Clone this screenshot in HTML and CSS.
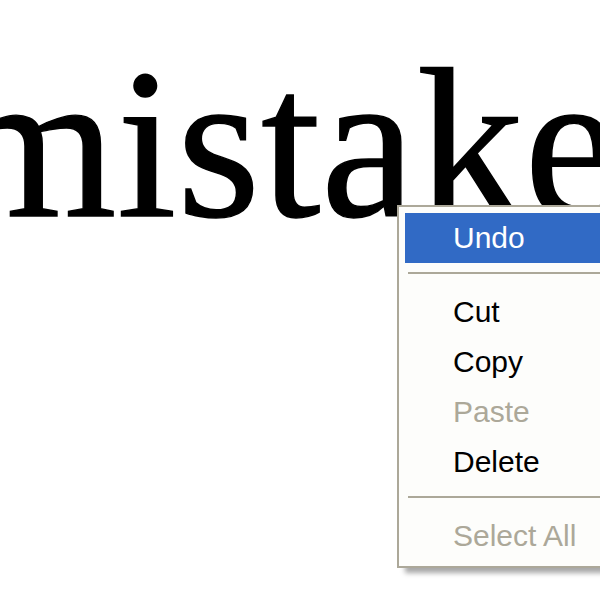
FILE: index.html
```html
<!DOCTYPE html>
<html lang="en">
<head>
    <meta charset="UTF-8">
    <title>mistake</title>
    <link rel="stylesheet" href="styles.css">
</head>
<body>
    <div class="page">
        <div class="word">mistake</div>

        <div class="context-menu">
            <div class="menu-item active">Undo</div>
            <div class="menu-sep"></div>
            <div class="menu-item">Cut</div>
            <div class="menu-item">Copy</div>
            <div class="menu-item disabled">Paste</div>
            <div class="menu-item">Delete</div>
            <div class="menu-sep"></div>
            <div class="menu-item disabled">Select All</div>
        </div>
    </div>
</body>
</html>
```

FILE: styles.css
```css
body {
    margin: 0;
    padding: 0;
    background: #fff;
    overflow: hidden;
}

.page {
    position: relative;
    width: 600px;
    height: 600px;
    overflow: hidden;
}

.word {
    font-family: "Liberation Serif", "Times New Roman", serif;
    font-size: 214px;
    line-height: 1;
    letter-spacing: 0.6px;
    color: #000;
    -webkit-text-stroke: 1.4px #000;
    margin: 37px 0 0 -50px;
    white-space: nowrap;
}

.context-menu {
    position: absolute;
    top: 205px;
    left: 397px;
    width: 260px;
    background: #fdfdfb;
    border: 2px solid #aca899;
    padding: 6px 0 5px 6px;
    box-shadow: 8px 5px 5px rgba(0, 0, 0, 0.35);
    font-family: "Liberation Sans", Tahoma, sans-serif;
    font-size: 30px;
}

.menu-item {
    height: 50px;
    line-height: 50px;
    padding-left: 48px;
    color: #000;
}

.menu-item.active {
    background: #316ac5;
    color: #fff;
}

.menu-item.disabled {
    color: #aca899;
}

.menu-sep {
    height: 24px;
    box-sizing: border-box;
    padding-top: 9px;
    margin-left: 3px;
}

.menu-sep::before {
    content: "";
    display: block;
    height: 2px;
    background: #aca899;
}
```
